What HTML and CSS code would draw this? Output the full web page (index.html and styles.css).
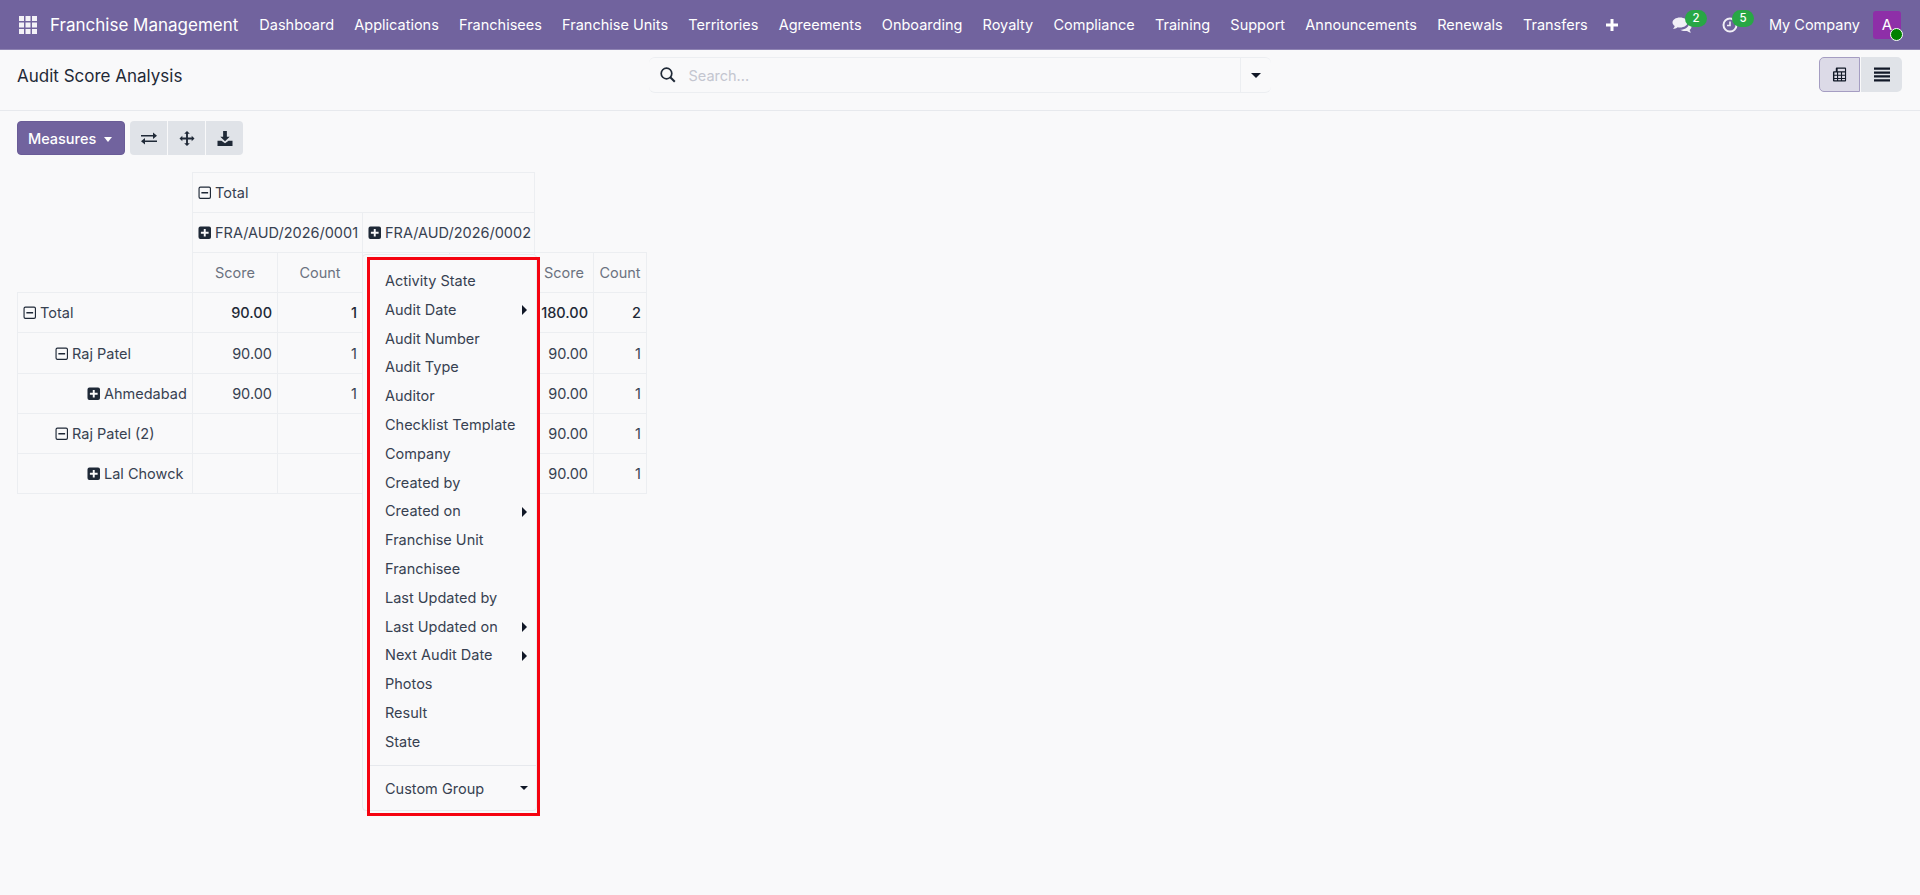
FILE: index.html
```html
<!DOCTYPE html>
<html lang="en">
<head>
<meta charset="utf-8">
<title>Audit Score Analysis</title>
<link rel="stylesheet" href="styles.css">
</head>
<body>
<svg class="defs" width="0" height="0" aria-hidden="true">
  <symbol id="plus-sq" viewBox="0 0 14 14"><path fill-rule="evenodd" d="M2.5 0.5h9a2 2 0 0 1 2 2v9a2 2 0 0 1-2 2h-9a2 2 0 0 1-2-2v-9a2 2 0 0 1 2-2zM6 3v3H3v2h3v3h2V8h3V6H8V3z"/></symbol>
  <symbol id="minus-sq" viewBox="0 0 14 14"><path fill-rule="evenodd" d="M2.5 0.5h9a2 2 0 0 1 2 2v9a2 2 0 0 1-2 2h-9a2 2 0 0 1-2-2v-9a2 2 0 0 1 2-2zM2.5 1.7a.8.8 0 0 0-.8.8v9a.8.8 0 0 0 .8.8h9a.8.8 0 0 0 .8-.8v-9a.8.8 0 0 0-.8-.8zM3.5 6.3h7v1.4h-7z"/></symbol>
</svg>

<header class="navbar">
  <svg class="apps" viewBox="0 0 18 18" aria-hidden="true"><path d="M0 0h5v5H0zM6.500 0h5v5h-5zM13 0h5v5h-5zM0 6.500h5v5H0zM6.500 6.500h5v5h-5zM13 6.500h5v5h-5zM0 13h5v5H0zM6.500 13h5v5h-5zM13 13h5v5h-5z"/></svg>
  <span class="brand">Franchise Management</span>
  <nav class="menu-links">
    <a>Dashboard</a><a>Applications</a><a>Franchisees</a><a>Franchise Units</a><a>Territories</a><a>Agreements</a><a>Onboarding</a><a>Royalty</a><a>Compliance</a><a>Training</a><a>Support</a><a>Announcements</a><a>Renewals</a><a>Transfers</a>
    <svg class="plus" viewBox="0 0 12 12" aria-hidden="true"><path d="M4.500 0h3v4.500H12v3H7.500V12h-3V7.500H0v-3h4.500z"/></svg>
  </nav>
  <div class="systray">
    <span class="tray chat">
      <svg viewBox="0 0 20 16" aria-hidden="true"><path d="M8 0.500c4.200 0 7.500 2.200 7.500 5s-3.300 5-7.500 5c-.8 0-1.600-.1-2.300-.2C4.400 11.300 2.700 12 1 12c.8-.8 1.500-1.900 1.700-3C1.300 8 .5 6.800.5 5.500c0-2.800 3.300-5 7.500-5z"/><path d="M17 6.200c1.500.9 2.500 2.200 2.500 3.600 0 1.200-.7 2.300-1.900 3.200.2.900.7 1.800 1.400 2.500-1.500-.1-2.900-.7-4-1.600-.7.2-1.400.2-2.100.2-1.800 0-3.400-.5-4.700-1.300 4.700 0 8.800-2.600 8.800-6.300z"/></svg>
      <b class="badge">2</b>
    </span>
    <span class="tray clock">
      <svg viewBox="0 0 16 16" aria-hidden="true"><path fill-rule="evenodd" d="M8 .5a7.500 7.500 0 1 1 0 15 7.500 7.500 0 0 1 0-15zm0 2a5.500 5.500 0 1 0 0 11 5.500 5.500 0 0 0 0-11zM7.200 4.500h1.600v4.700H5V7.700h2.200z"/></svg>
      <b class="badge">5</b>
    </span>
    <span class="company">My Company</span>
    <span class="avatar">A<i class="dot"></i></span>
  </div>
</header>

<section class="control">
  <h1 class="title">Audit Score Analysis</h1>
  <div class="search">
    <svg class="glass" viewBox="0 0 16 16" aria-hidden="true"><circle cx="6.500" cy="6.500" r="5.300" fill="none" stroke="currentColor" stroke-width="1.700"/><path d="M10.300 10.300l4.500 4.500" stroke="currentColor" stroke-width="2"/></svg>
    <span class="placeholder">Search...</span>
    <span class="search-drop"><i class="caret"></i></span>
  </div>
  <div class="views">
    <button class="view active" type="button" aria-label="Pivot">
      <svg viewBox="0 0 16 16" aria-hidden="true"><path fill-rule="evenodd" d="M4.500 .5h9a1 1 0 0 1 1 1v13a1 1 0 0 1-1 1h-12a1 1 0 0 1-1-1V5.500a1 1 0 0 1 1-1h2V1.500a1 1 0 0 1 1-1zM5.500 1.800v2.700h7.800V1.800zM2 5.800v2.400h2.800V5.800zm4 0v2.400h3V5.800zm4.200 0v2.400h3.100V5.800zM2 9.400v2.200h2.800V9.400zm4 0v2.200h3V9.400zm4.200 0v2.200h3.100V9.400zM2 12.800v1.400h2.800v-1.400zm4 0v1.400h3v-1.400zm4.200 0v1.400h3.100v-1.400z"/></svg>
    </button>
    <button class="view" type="button" aria-label="List">
      <svg viewBox="0 0 16 14" aria-hidden="true"><path d="M0 0h16v2.300H0zM0 3.900h16v2.300H0zM0 7.800h16v2.300H0zM0 11.700h16V14H0z"/></svg>
    </button>
  </div>
</section>

<section class="toolbar">
  <button class="measures" type="button">Measures <i class="caret white"></i></button>
  <div class="btn-group">
    <button class="tool" type="button" aria-label="Flip axis">
      <svg viewBox="0 0 16 14" aria-hidden="true"><path d="M0 3.400h12V1l4 3.200-4 3.200V5H0zM16 9H4V6.600L0 9.800 4 13v-2.400h12z"/></svg>
    </button>
    <button class="tool" type="button" aria-label="Expand all">
      <svg viewBox="0 0 16 16" aria-hidden="true"><path d="M8 0l3 3H9v4h4V5l3 3-3 3V9H9v4h2l-3 3-3-3h2V9H3v2L0 8l3-3v2h4V3H5z"/></svg>
    </button>
    <button class="tool" type="button" aria-label="Download">
      <svg viewBox="0 0 16 16" aria-hidden="true"><path d="M6 0h4v6h3l-5 5-5-5h3z"/><path d="M0 10.500h4.200L8 13l3.800-2.500H16V16H0z"/></svg>
    </button>
  </div>
</section>

<main class="pivot-wrap">
  <table class="pivot">
    <colgroup>
      <col class="c-label"><col class="c-s1"><col class="c-c1"><col class="c-s2"><col class="c-c2"><col class="c-s3"><col class="c-c3">
    </colgroup>
    <thead>
      <tr>
        <th class="blank" rowspan="3"></th>
        <th class="head" colspan="4"><svg class="tg"><use href="#minus-sq"/></svg>Total</th>
        <th class="blank" colspan="2" rowspan="2"></th>
      </tr>
      <tr>
        <th class="head" colspan="2"><svg class="tg"><use href="#plus-sq"/></svg>FRA/AUD/2026/0001</th>
        <th class="head" colspan="2"><svg class="tg"><use href="#plus-sq"/></svg>FRA/AUD/2026/0002</th>
      </tr>
      <tr class="measure-row">
        <th>Score</th><th>Count</th><th></th><th></th><th>Score</th><th>Count</th>
      </tr>
    </thead>
    <tbody>
      <tr class="total">
        <th class="l0"><svg class="tg"><use href="#minus-sq"/></svg>Total</th>
        <td>90.00</td><td>1</td><td></td><td></td><td>180.00</td><td>2</td>
      </tr>
      <tr class="tall">
        <th class="l1"><svg class="tg"><use href="#minus-sq"/></svg>Raj Patel</th>
        <td>90.00</td><td>1</td><td></td><td></td><td>90.00</td><td>1</td>
      </tr>
      <tr>
        <th class="l2"><svg class="tg"><use href="#plus-sq"/></svg>Ahmedabad</th>
        <td>90.00</td><td>1</td><td></td><td></td><td>90.00</td><td>1</td>
      </tr>
      <tr>
        <th class="l1"><svg class="tg"><use href="#minus-sq"/></svg>Raj Patel (2)</th>
        <td></td><td></td><td></td><td></td><td>90.00</td><td>1</td>
      </tr>
      <tr>
        <th class="l2"><svg class="tg"><use href="#plus-sq"/></svg>Lal Chowck</th>
        <td></td><td></td><td></td><td></td><td>90.00</td><td>1</td>
      </tr>
    </tbody>
  </table>

  <div class="dropdown">
    <ul class="items">
      <li>Activity State</li>
      <li class="sub">Audit Date</li>
      <li>Audit Number</li>
      <li>Audit Type</li>
      <li>Auditor</li>
      <li>Checklist Template</li>
      <li>Company</li>
      <li>Created by</li>
      <li class="sub">Created on</li>
      <li>Franchise Unit</li>
      <li>Franchisee</li>
      <li>Last Updated by</li>
      <li class="sub">Last Updated on</li>
      <li class="sub">Next Audit Date</li>
      <li>Photos</li>
      <li>Result</li>
      <li>State</li>
    </ul>
    <hr class="sep">
    <div class="custom">Custom Group <i class="caret small"></i></div>
  </div>
  <div class="highlight"></div>
</main>
</body>
</html>
```

FILE: styles.css
```css
* { box-sizing: border-box; }
html, body { margin: 0; height: 100%; }
body {
  background: #f9f9fa;
  color: #374151;
  font-family: Inter, "Liberation Sans", sans-serif;
  font-size: 14.5px;
  overflow: hidden;
}
.defs { position: absolute; }

/* navbar */
.navbar {
  display: flex;
  align-items: center;
  height: 50px;
  padding: 0 19px;
  background: #71639e;
  border-bottom: 1px solid #8f84b3;
  color: #fff;
}
.apps { width: 18px; height: 18px; fill: #fff; opacity: .92; }
.brand { margin-left: 13px; font-size: 17px; white-space: nowrap; }
.menu-links {
  display: flex;
  align-items: center;
  gap: 20.200px;
  margin-left: 21px;
  white-space: nowrap;
}
.plus { width: 12px; height: 12px; margin-left: -2px; fill: #fff; }
.systray { display: flex; align-items: center; margin-left: auto; }
.tray { position: relative; display: flex; }
.chat { margin-right: -2px; }
.chat svg { width: 20px; height: 16px; fill: #f1eff6; }
.clock { margin-left: 32px; }
.clock svg { width: 16px; height: 16px; fill: #f1eff6; }
.badge {
  position: absolute;
  display: block;
  width: 22px;
  height: 17px;
  border-radius: 9px;
  background: #28a745;
  color: #fff;
  font-size: 11.500px;
  font-weight: 500;
  line-height: 17px;
  text-align: center;
}
.chat .badge { left: 13px; top: -7px; }
.clock .badge { left: 10px; top: -7px; }
.company { margin-left: 31px; white-space: nowrap; }
.avatar {
  position: relative;
  width: 28px;
  height: 28px;
  margin-left: 13px;
  border-radius: 3px;
  background: #8e2fa8;
  font-size: 15px;
  line-height: 28px;
  text-align: center;
}
.dot {
  position: absolute;
  right: -2px;
  bottom: -2px;
  width: 13px;
  height: 13px;
  border: 1.500px solid #fff;
  border-radius: 50%;
  background: #008000;
}

/* control panel */
.control {
  display: grid;
  grid-template-columns: 1fr 622px 1fr;
  align-items: start;
  height: 61px;
  padding: 7px 18px 0 17px;
  border-bottom: 1px solid #e7e9ed;
}
.title { margin: 9px 0 0; color: #1f2937; font-size: 17px; font-weight: 400; }
.search {
  display: flex;
  align-items: center;
  height: 36px;
  border: 1px solid #eceef1;
  border-width: 1px 0;
  border-radius: 6px;
  padding-left: 11px;
}
.glass { width: 16px; height: 16px; color: #1f2937; }
.placeholder { margin-left: 13px; color: #c4c6d0; font-size: 14.500px; }
.search-drop {
  display: flex;
  align-items: center;
  justify-content: center;
  width: 31px;
  height: 100%;
  margin-left: auto;
  border-left: 1px solid #eceef1;
}
.caret {
  display: inline-block;
  border-top: 5px solid #111827;
  border-left: 5px solid transparent;
  border-right: 5px solid transparent;
}
.caret.white { margin-left: 4px; border-top-color: #fff; border-width: 5px 4.500px 0; vertical-align: 2px; }
.caret.small { border-width: 4px 4px 0; }
.views { display: flex; justify-content: flex-end; gap: 1px; }
.view {
  display: flex;
  align-items: center;
  justify-content: center;
  width: 41px;
  height: 35px;
  padding: 0;
  border: 0;
  border-radius: 0 5px 5px 0;
  background: #e0e3e8;
}
.view.active {
  border: 1px solid #a59dc2;
  border-radius: 5px 0 0 5px;
  background: #dcdae7;
}
.view svg { width: 16px; height: 15px; fill: #111827; }

/* toolbar */
.toolbar { display: flex; gap: 5px; padding: 10px 17px 0; }
.measures {
  width: 108px;
  height: 34px;
  padding: 0 2px 0 0;
  border: 1px solid #6a5c97;
  border-radius: 4px;
  background: #71639e;
  color: #fff;
  font: 500 14.500px Inter, "Liberation Sans", sans-serif;
}
.btn-group { display: flex; gap: 1px; }
.tool {
  display: flex;
  align-items: center;
  justify-content: center;
  width: 37px;
  height: 34px;
  padding: 0;
  border: 0;
  background: #e0e3e8;
}
.tool:first-child { border-radius: 4px 0 0 4px; }
.tool:last-child { border-radius: 0 4px 4px 0; }
.tool svg { width: 16px; height: 15px; fill: #1f2937; }

/* pivot */
.pivot-wrap { position: relative; padding: 17px 0 0 17px; }
.pivot { border-collapse: collapse; table-layout: fixed; width: 629px; }
.c-label { width: 175px; }
.c-s1, .c-c1 { width: 85px; }
.c-s2 { width: 87px; }
.c-c2 { width: 85px; }
.c-s3 { width: 59px; }
.c-c3 { width: 53px; }
.pivot th, .pivot td {
  height: 40px;
  padding: 0 5px;
  border: 1px solid #eceef1;
  font-weight: 400;
  white-space: nowrap;
}
.pivot th.blank { border: 0; }
.pivot .head { text-align: left; color: #374151; padding-right: 0; }
.measure-row th { color: #6b7280; text-align: center; }
.pivot td { text-align: right; color: #374151; }
.pivot tbody th { text-align: left; color: #374151; }
.pivot .total td { color: #1f2937; font-weight: 500; }
.pivot .tall th, .pivot .tall td { height: 41px; }
.pivot .l1 { padding-left: 37px; }
.pivot .l2 { padding-left: 69px; padding-right: 0; }
.tg {
  width: 13.500px;
  height: 13.500px;
  margin-right: 3.500px;
  vertical-align: -1.500px;
  fill: #1f2937;
}

/* dropdown with its highlight frame */
.dropdown {
  position: absolute;
  left: 362px;
  top: 99px;
  width: 175px;
  height: 557px;
  padding: 12px 0 0 22px;
  border: 1px solid #e9ebee;
  border-radius: 4px;
  background: #f9f9fa;
}
.items { margin: 0; padding: 0; list-style: none; }
.items li {
  position: relative;
  height: 28.800px;
  line-height: 28.800px;
  white-space: nowrap;
}
.items .sub::after {
  content: "";
  position: absolute;
  left: 137px;
  top: 9.500px;
  border-left: 5px solid #111827;
  border-top: 5px solid transparent;
  border-bottom: 5px solid transparent;
}
.sep {
  height: 1px;
  margin: 8px 0 9px -17px;
  border: 0;
  background: #e7e9ed;
}
.custom { position: relative; height: 28.800px; line-height: 28.800px; white-space: nowrap; }
.custom .caret { position: absolute; left: 135px; top: 11px; }
.highlight {
  position: absolute;
  left: 367px;
  top: 102px;
  width: 173px;
  height: 559px;
  border: 3px solid #f5030f;
  pointer-events: none;
}
```
